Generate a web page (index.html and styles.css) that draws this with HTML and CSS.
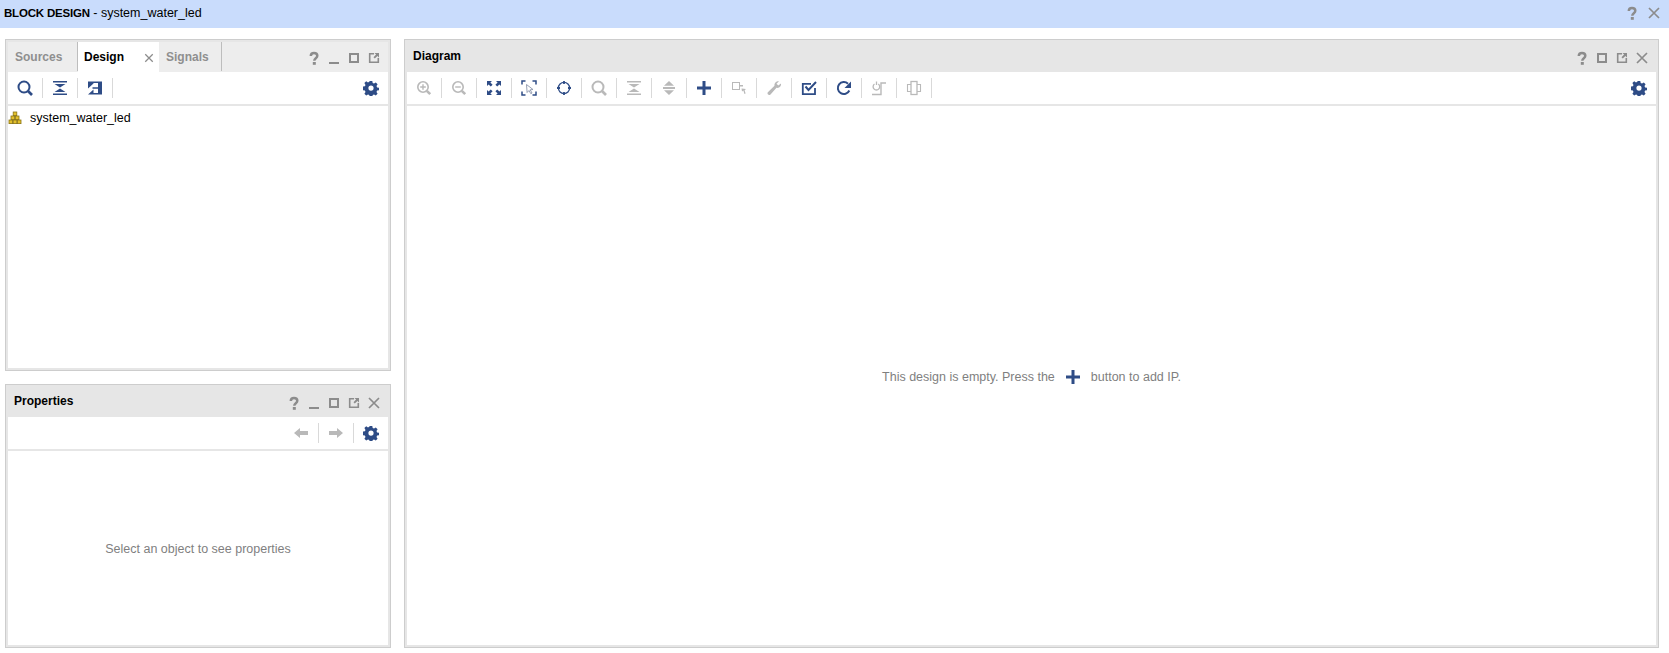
FILE: index.html
```html
<!DOCTYPE html>
<html lang="en">
<head>
    <meta charset="UTF-8">
    <title>BLOCK DESIGN - system_water_led</title>
    <link rel="stylesheet" href="styles.css">
</head>
<body>
    <svg class="defs" width="0" height="0">
        <symbol id="i-help" viewBox="0 0 16 16"><path d="M4.800 6C4.800 4 6.200 3 8 3s3.300 1 3.300 2.800c0 2.400-3 2.400-3 4.900" fill="none" stroke="currentColor" stroke-width="2.500"/><rect x="6.800" y="12" width="3" height="2.800" fill="currentColor"/></symbol>
        <symbol id="i-min" viewBox="0 0 16 16"><rect x="3" y="12" width="10" height="2" fill="currentColor"/></symbol>
        <symbol id="i-max" viewBox="0 0 16 16"><rect x="4" y="4" width="8" height="8" fill="none" stroke="currentColor" stroke-width="2"/></symbol>
        <symbol id="i-float" viewBox="0 0 16 16"><path d="M8 3.700H3.700v8.600h8.600V8" fill="none" stroke="currentColor" stroke-width="1.600"/><path d="M8.500 3H13v4.500l-1.600-1.600-2.600 2.600-1.300-1.300 2.600-2.600z" fill="currentColor"/></symbol>
        <symbol id="i-close" viewBox="0 0 16 16"><path d="M3 3l10 10M13 3L3 13" fill="none" stroke="currentColor" stroke-width="1.700"/></symbol>
        <symbol id="i-search" viewBox="0 0 16 16"><circle cx="7" cy="7" r="5.500" fill="none" stroke="currentColor" stroke-width="2"/><path d="M11 11l4 4" stroke="currentColor" stroke-width="2.600"/></symbol>
        <symbol id="i-zoomin" viewBox="0 0 16 16"><circle cx="7" cy="7" r="5.200" fill="none" stroke="currentColor" stroke-width="1.600"/><path d="M10.800 10.800l3.400 3.400" stroke="currentColor" stroke-width="2.600"/><path d="M4.200 7h5.600M7 4.200v5.600" stroke="currentColor" stroke-width="1.400"/></symbol>
        <symbol id="i-zoomout" viewBox="0 0 16 16"><circle cx="7" cy="7" r="5.200" fill="none" stroke="currentColor" stroke-width="1.600"/><path d="M10.800 10.800l3.400 3.400" stroke="currentColor" stroke-width="2.600"/><path d="M4.200 7h5.600" stroke="currentColor" stroke-width="1.400"/></symbol>
        <symbol id="i-collapse" viewBox="0 0 16 16"><rect x="1" y="1" width="14" height="1.500" fill="currentColor"/><rect x="1" y="13.500" width="14" height="1.500" fill="currentColor"/><path d="M2.500 4h11L8 7.500zM2.500 12h11L8 8.500z" fill="currentColor"/></symbol>
        <symbol id="i-expand" viewBox="0 0 16 16"><path d="M8 1l5 4.800H3zM8 15l-5-4.800h10z" fill="currentColor"/><rect x="2" y="7" width="12" height="2" fill="currentColor"/></symbol>
        <symbol id="i-hier" viewBox="0 0 16 16"><path d="M1 1.500h14v13H1l5.500-5V13H11V8.700H5.500V7.200H11V3H6.500v.5L1 8.500z" fill="currentColor"/></symbol>
        <symbol id="i-gear" viewBox="0 0 16 16"><path d="M6.700 1h2.600l.4 2 1.300.6 1.800-1.100 1.800 1.800-1.100 1.800.6 1.300 2 .4v2.400l-2 .4-.6 1.300 1.100 1.800-1.800 1.800-1.800-1.100-1.300.6-.4 2H6.700l-.4-2-1.300-.6-1.800 1.100-1.800-1.800 1.100-1.800-.6-1.300-2-.4V6.600l2-.4.6-1.300-1.100-1.800 1.800-1.800 1.800 1.100 1.300-.6zM8 5.500a2.600 2.600 0 1 0 0 5.200 2.600 2.600 0 0 0 0-5.200z" fill="currentColor" fill-rule="evenodd"/></symbol>
        <symbol id="i-fit" viewBox="0 0 16 16"><path d="M1 1h5L4.400 2.600 6.600 4.800 4.800 6.600 2.600 4.400 1 6zM15 1v5l-1.600-1.600-2.200 2.200-1.800-1.800 2.200-2.200L10 1zM1 15v-5l1.600 1.600 2.200-2.200 1.800 1.800-2.200 2.200L6 15zM15 15h-5l1.600-1.600-2.200-2.200 1.800-1.800 2.200 2.200L15 10z" fill="currentColor"/></symbol>
        <symbol id="i-fitsel" viewBox="0 0 16 16"><path d="M1 4.500V1h3.500M11.500 1H15v3.500M15 11.500V15h-3.500M4.500 15H1v-3.500" fill="none" stroke="currentColor" stroke-width="1.500"/><path d="M5.500 4.500l6.500 5-2.800.3 1.800 3.200-1.200.7-1.800-3.200-1.900 2z" fill="#fff" stroke="#8a94aa" stroke-width=".9"/></symbol>
        <symbol id="i-target" viewBox="0 0 16 16"><circle cx="8" cy="8" r="5.600" fill="none" stroke="currentColor" stroke-width="1.300"/><path d="M8 1v3M8 12v3M1 8h3M12 8h3" stroke="currentColor" stroke-width="1.800"/></symbol>
        <symbol id="i-plus" viewBox="0 0 16 16"><path d="M6.500 1h3v5.500H15v3H9.500V15h-3V9.500H1v-3h5.500z" fill="currentColor"/></symbol>
        <symbol id="i-port" viewBox="0 0 16 16"><rect x="1.500" y="2.500" width="7" height="7" fill="none" stroke="currentColor" stroke-width="1"/><path d="M9 5h3v1.500H9zM10.500 8.500l4.500.5-1.400 1.200 1 3.300-1.200.4-1-3.300-1.400 1z" fill="currentColor"/></symbol>
        <symbol id="i-wrench" viewBox="0 0 16 16"><path d="M15 3.500c.5 2.300-1.500 5-4.500 4.300L4.500 14.500c-1 1-3 .5-3-1.200 0-.6.200-1 .6-1.300L8.500 5.800C8 3 10.500.800 13 1.200L10.500 3.800l1.800 1.800z" fill="currentColor"/></symbol>
        <symbol id="i-check" viewBox="0 0 16 16"><path d="M14 8v6.200H1.800V3.800H10" fill="none" stroke="currentColor" stroke-width="1.800"/><path d="M4.500 6.500L7.500 10 15 2" fill="none" stroke="currentColor" stroke-width="2"/></symbol>
        <symbol id="i-refresh" viewBox="0 0 16 16"><path d="M13.300 10.500A6 6 0 1 1 12 3.700" fill="none" stroke="currentColor" stroke-width="2"/><path d="M15 1.500V8H8.500z" fill="currentColor"/></symbol>
        <symbol id="i-regen" viewBox="0 0 16 16"><path d="M1 14.500h9V3h5" fill="none" stroke="currentColor" stroke-width="1.400"/><path d="M7.300 4A3.300 3.300 0 1 1 3.500 4" fill="none" stroke="currentColor" stroke-width="1.300"/><path d="M5.500 1.500v3.500" stroke="currentColor" stroke-width="1.300"/></symbol>
        <symbol id="i-chip" viewBox="0 0 16 16"><rect x="5" y="1.500" width="6" height="13" fill="none" stroke="currentColor" stroke-width="1.300"/><path d="M5 4.500H1.500v7H5M11 4.500h3.500v7H11" fill="none" stroke="currentColor" stroke-width="1.100"/></symbol>
        <symbol id="i-left" viewBox="0 0 16 16"><path d="M1 8l6-5v3h8v4H7v3z" fill="currentColor"/></symbol>
        <symbol id="i-right" viewBox="0 0 16 16"><path d="M15 8l-6-5v3H1v4h8v3z" fill="currentColor"/></symbol>
    </svg>

    <div class="title-bar">
        <span class="title-text"><b>BLOCK DESIGN</b> - system_water_led</span>
        <div class="title-actions">
            <svg class="icon-title"><use href="#i-help"/></svg>
            <svg class="icon-title"><use href="#i-close"/></svg>
        </div>
    </div>

    <div class="workspace">
        <div class="left-column">
            <section class="panel panel-sources">
                <div class="panel-header tabbed">
                    <div class="tab">Sources</div>
                    <div class="tab active">Design<svg class="tab-close"><use href="#i-close"/></svg></div>
                    <div class="tab last">Signals</div>
                    <div class="window-actions">
                        <svg class="icon-win"><use href="#i-help"/></svg>
                        <svg class="icon-win"><use href="#i-min"/></svg>
                        <svg class="icon-win"><use href="#i-max"/></svg>
                        <svg class="icon-win"><use href="#i-float"/></svg>
                    </div>
                </div>
                <div class="toolbar">
                    <span class="tool on"><svg><use href="#i-search"/></svg></span>
                    <span class="tool on"><svg><use href="#i-collapse"/></svg></span>
                    <span class="tool on"><svg><use href="#i-hier"/></svg></span>
                    <span class="tool-gear"><svg><use href="#i-gear"/></svg></span>
                </div>
                <div class="panel-body tree">
                    <div class="tree-row">
                        <svg class="bd-icon" viewBox="0 0 14 14">
                            <g fill="#e3c02a" stroke="#8a7414" stroke-width=".8">
                                <rect x="5.200" y="1" width="3.600" height="3.600"/>
                                <rect x="3" y="5" width="3.600" height="3.600"/>
                                <rect x="7.400" y="5" width="3.600" height="3.600"/>
                                <rect x="1" y="9" width="3.600" height="3.600"/>
                                <rect x="5.200" y="9" width="3.600" height="3.600"/>
                                <rect x="9.400" y="9" width="3.600" height="3.600"/>
                            </g>
                        </svg>
                        <span>system_water_led</span>
                    </div>
                </div>
            </section>

            <section class="panel panel-props">
                <div class="panel-header">
                    <span class="panel-title">Properties</span>
                    <div class="window-actions">
                        <svg class="icon-win"><use href="#i-help"/></svg>
                        <svg class="icon-win"><use href="#i-min"/></svg>
                        <svg class="icon-win"><use href="#i-max"/></svg>
                        <svg class="icon-win"><use href="#i-float"/></svg>
                        <svg class="icon-win"><use href="#i-close"/></svg>
                    </div>
                </div>
                <div class="toolbar end">
                    <span class="tool off"><svg><use href="#i-left"/></svg></span>
                    <span class="tool off"><svg><use href="#i-right"/></svg></span>
                    <span class="tool-gear"><svg><use href="#i-gear"/></svg></span>
                </div>
                <div class="panel-body empty">
                    <span class="hint">Select an object to see properties</span>
                </div>
            </section>
        </div>

        <section class="panel panel-diagram">
            <div class="panel-header">
                <span class="panel-title">Diagram</span>
                <div class="window-actions">
                    <svg class="icon-win"><use href="#i-help"/></svg>
                    <svg class="icon-win"><use href="#i-max"/></svg>
                    <svg class="icon-win"><use href="#i-float"/></svg>
                    <svg class="icon-win"><use href="#i-close"/></svg>
                </div>
            </div>
            <div class="toolbar">
                <span class="tool off"><svg><use href="#i-zoomin"/></svg></span>
                <span class="tool off"><svg><use href="#i-zoomout"/></svg></span>
                <span class="tool on"><svg><use href="#i-fit"/></svg></span>
                <span class="tool on"><svg><use href="#i-fitsel"/></svg></span>
                <span class="tool on"><svg><use href="#i-target"/></svg></span>
                <span class="tool off"><svg><use href="#i-search"/></svg></span>
                <span class="tool off"><svg><use href="#i-collapse"/></svg></span>
                <span class="tool off"><svg><use href="#i-expand"/></svg></span>
                <span class="tool on"><svg><use href="#i-plus"/></svg></span>
                <span class="tool off"><svg><use href="#i-port"/></svg></span>
                <span class="tool off"><svg><use href="#i-wrench"/></svg></span>
                <span class="tool on"><svg><use href="#i-check"/></svg></span>
                <span class="tool on"><svg><use href="#i-refresh"/></svg></span>
                <span class="tool off"><svg><use href="#i-regen"/></svg></span>
                <span class="tool off"><svg><use href="#i-chip"/></svg></span>
                <span class="tool-gear"><svg><use href="#i-gear"/></svg></span>
            </div>
            <div class="panel-body empty">
                <span class="hint">This design is empty. Press the<svg class="hint-plus"><use href="#i-plus"/></svg>button to add IP.</span>
            </div>
        </section>
    </div>
</body>
</html>
```

FILE: styles.css
```css
* { box-sizing: border-box; }
html, body { height: 100%; }
body {
    margin: 0;
    display: flex;
    flex-direction: column;
    background-color: #fff;
    font-family: "Liberation Sans", Arial, sans-serif;
    font-size: 12px;
    color: #000;
    overflow: hidden;
}
.defs { position: absolute; }

.title-bar {
    height: 28px;
    flex: none;
    padding: 0 7px 0 4px;
    display: flex;
    align-items: center;
    justify-content: space-between;
    background-color: #c9dcfc;
}
.title-text { font-size: 12.5px; position: relative; top: -1px; }
.title-text b { font-size: 11.5px; letter-spacing: -.2px; }
.title-actions { display: flex; gap: 6px; color: #8c8c8c; margin-top: -2px; }
.icon-title { width: 16px; height: 16px; }

.workspace {
    flex: 1;
    display: flex;
    gap: 13px;
    padding: 11px 10px 5px 5px;
    min-height: 0;
}
.left-column {
    width: 386px;
    display: flex;
    flex-direction: column;
    gap: 13px;
}
.panel {
    display: flex;
    flex-direction: column;
    border: 1px solid #cdcdcd;
    box-shadow: inset 0 0 0 2px #e6e6e6;
    padding: 2px;
    background-color: #fff;
}
.panel-sources { height: 332px; }
.panel-props { flex: 1; }
.panel-diagram { flex: 1; }

.panel-header {
    height: 30px;
    flex: none;
    display: flex;
    align-items: center;
    padding-left: 6px;
    background-color: #e6e6e6;
}
.panel-header.tabbed {
    padding-left: 0;
    background-color: #ededed;
    align-items: stretch;
}
.panel-title { font-weight: bold; position: relative; top: -1px; }
.tab {
    display: flex;
    align-items: center;
    padding-left: 7px;
    width: 70px;
    font-weight: bold;
    color: #8f8f8f;
    border-right: 1px solid #bdbdbd;
    margin-bottom: 1px;
}
.tab.active {
    width: 81px;
    padding-left: 6px;
    margin-bottom: 0;
    background-color: #fff;
    color: #000;
    border-right: none;
    justify-content: space-between;
}
.tab.last { width: 63px; padding-left: 7px; }
.tab-close { width: 12px; height: 12px; margin-right: 4px; margin-top: 1px; color: #8c8c8c; }

.window-actions {
    margin-left: auto;
    padding-right: 6px;
    display: flex;
    align-items: center;
    gap: 4px;
    color: #8c8c8c;
}
.icon-win { width: 16px; height: 16px; margin-top: 2px; }

.toolbar {
    height: 34px;
    flex: none;
    display: flex;
    align-items: center;
    border-bottom: 2px solid #e6e6e6;
}
.toolbar.end { justify-content: flex-end; }
.tool {
    width: 35px;
    height: 20px;
    display: flex;
    align-items: center;
    justify-content: center;
    border-right: 1px solid #d9d9d9;
}
.tool svg, .tool-gear svg { width: 16px; height: 16px; }
.tool.on { color: #2e4c86; }
.tool.off { color: #b9b9b9; }
.tool-gear {
    margin-left: auto;
    width: 34px;
    display: flex;
    justify-content: center;
    color: #2e4c86;
}
.toolbar.end .tool-gear { margin-left: 0; }

.panel-body { flex: 1; min-height: 0; }
.tree-row {
    height: 24px;
    display: flex;
    align-items: center;
    gap: 8px;
    font-size: 12.5px;
}
.bd-icon { width: 14px; height: 14px; }
.empty {
    display: flex;
    align-items: center;
    justify-content: center;
    padding-top: 2px;
}
.hint {
    display: flex;
    align-items: center;
    font-size: 12.5px;
    color: #7f7f7f;
}
.hint-plus {
    width: 16px;
    height: 16px;
    margin: 0 10px 0 10px;
    color: #2e4c86;
}
```
